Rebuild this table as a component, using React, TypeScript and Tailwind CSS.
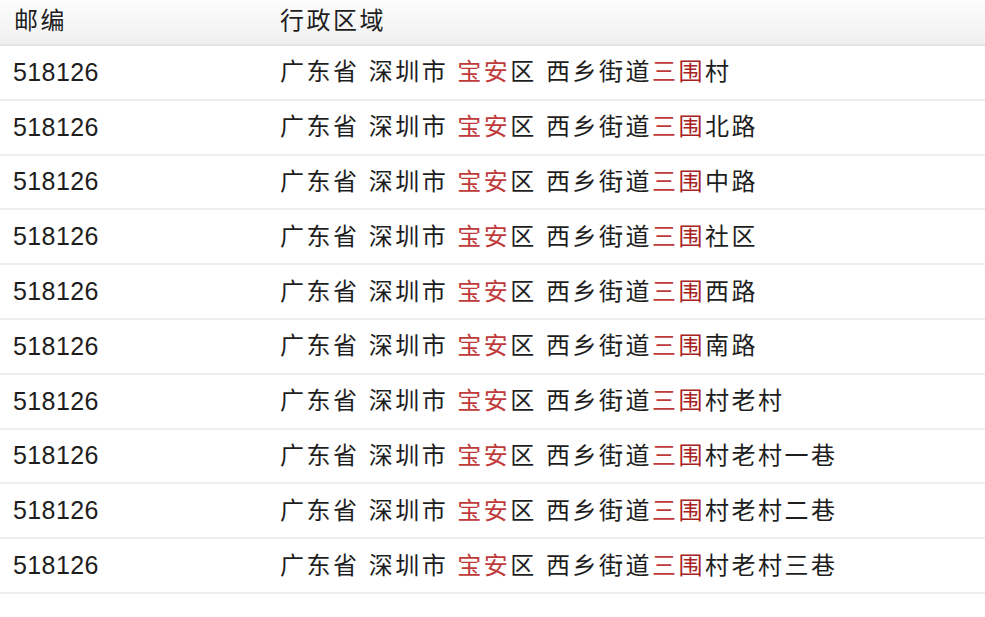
const rows = [
  '村',
  '北路',
  '中路',
  '社区',
  '西路',
  '南路',
  '村老村',
  '村老村一巷',
  '村老村二巷',
  '村老村三巷',
];

const font = { fontFamily: '"Liberation Sans", "Noto Sans CJK SC", sans-serif' };

export default function App() {
  return (
    <div className="w-[985px] h-[617px] bg-white text-[#1e1e1e] overflow-hidden" style={font}>
      {/* Header */}
      <div className="flex items-center h-[46px] pb-[2px] bg-gradient-to-b from-[#fdfdfd] to-[#f0f0f0] border-b-2 border-[#e4e4e4] text-[24px] leading-none tracking-[2.5px]">
        <div className="w-[280px] pl-[14px]">邮编</div>
        <div className="flex-1">行政区域</div>
      </div>

      {/* Rows */}
      {rows.map((tail, i) => (
        <div
          key={i}
          className="flex items-center h-[54.8px] border-b-2 border-[#ededed] text-[24px] leading-none"
        >
          <div className="w-[280px] pl-[13px] text-[25px] tracking-[0.4px]">518126</div>
          <div className="flex-1 whitespace-pre tracking-[2.5px]">
            广东省 深圳市 <span className="text-[#c03a3a]">宝安</span>区 西乡街道
            <span className="text-[#c03a3a]">三</span>
            <span className="text-[#a82222]">围</span>
            {tail}
          </div>
        </div>
      ))}
    </div>
  );
}
